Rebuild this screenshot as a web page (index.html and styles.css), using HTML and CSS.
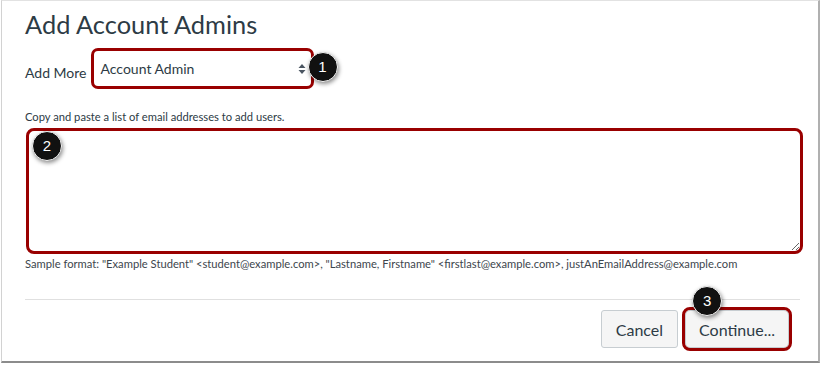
FILE: index.html
```html
<!DOCTYPE html>
<html>
<head>
<meta charset="utf-8">
<link rel="stylesheet" href="styles.css">
</head>
<body>
<div class="frame">
  <h1 class="title">Add Account Admins</h1>
  <div class="role-row">
    <span class="role-label">Add More</span>
    <div class="select-box">
      <span class="select-text">Account Admin</span>
      <svg class="select-arrows" width="8" height="12" viewBox="0 0 8 12">
        <path d="M4 1 L7.5 5 L0.5 5 Z" fill="#4a5561"/>
        <path d="M0.5 7 L7.5 7 L4 11 Z" fill="#4a5561"/>
      </svg>
      <span class="badge badge-1">1</span>
    </div>
  </div>
  <p class="hint">Copy and paste a list of email addresses to add users.</p>
  <div class="area-wrap">
    <textarea class="emails"></textarea>
    <span class="badge badge-2">2</span>
  </div>
  <p class="sample">Sample format: "Example Student" &lt;student@example.com&gt;, "Lastname, Firstname" &lt;firstlast@example.com&gt;, justAnEmailAddress@example.com</p>
  <div class="footer">
    <button class="btn">Cancel</button>
    <button class="btn btn-continue">Continue...<span class="badge badge-3">3</span></button>
  </div>
</div>
</body>
</html>
```

FILE: styles.css
```css
html, body {
  margin: 0;
  padding: 0;
  background: #ffffff;
}
body {
  width: 820px;
  height: 365px;
  font-family: Lato, "Noto Sans", sans-serif;
  color: #2d3b45;
}
.frame {
  box-sizing: border-box;
  margin-left: 1px;
  width: 819px;
  height: 363px;
  border-top: 1px solid #e2e2e2;
  border-left: 1px solid #d2d2d2;
  border-right: 2px solid #b0b0b0;
  border-bottom: 2px solid #8c8c8c;
  padding: 8px 0 0 23px;
}
.title {
  margin: 0;
  font-size: 25.4px;
  line-height: 31px;
  font-weight: 400;
  color: #2d3b45;
}
.role-row {
  display: flex;
  margin-top: 8px;
  gap: 4px;
}
.role-label {
  align-self: flex-start;
  margin-top: 15px;
  font-size: 14px;
  line-height: 20px;
}
.select-box {
  position: relative;
  box-sizing: border-box;
  width: 223px;
  height: 41px;
  border: 3px solid #990000;
  border-radius: 7px;
  display: flex;
  align-items: center;
  padding: 0 5px 0 7px;
}
.select-text {
  flex: 1;
  font-size: 14px;
  line-height: 20px;
  color: #2d3b45;
}
.select-arrows {
  display: block;
}
.badge {
  position: absolute;
  box-sizing: border-box;
  width: 30px;
  height: 30px;
  border-radius: 50%;
  background: #111111;
  border: 1.5px solid #f4f4f4;
  box-shadow: 1px 2px 4px rgba(0,0,0,0.45);
  color: #ffffff;
  font-family: "Liberation Sans", Arial, sans-serif;
  font-size: 15px;
  line-height: 27px;
  text-align: center;
}
.badge-1 {
  left: 214px;
  top: 1px;
}
.hint {
  margin: 20px 0 0 0;
  font-size: 11.2px;
  line-height: 16px;
  color: #2d3b45;
}
.area-wrap {
  position: relative;
  margin: 3px 0 0 1px;
  width: 777px;
  height: 126px;
}
.emails {
  display: block;
  box-sizing: border-box;
  width: 777px;
  height: 126px;
  margin: 0;
  border: 3px solid #990000;
  border-radius: 8px;
  background: #ffffff;
  resize: vertical;
  outline: none;
}
.badge-2 {
  left: 6px;
  top: 3px;
}
.sample {
  margin: 2px 0 0 0;
  font-size: 11.2px;
  line-height: 16px;
  color: #3d464d;
}
.footer {
  width: 775px;
  margin-top: 27px;
  border-top: 1px solid #e0e0e0;
  padding: 10px 11px 0 0;
  box-sizing: border-box;
  display: flex;
  justify-content: flex-end;
  gap: 7px;
}
.btn {
  position: relative;
  box-sizing: border-box;
  height: 38px;
  padding: 0 14px;
  border: 1px solid #c7cdd1;
  border-radius: 3px;
  background: #f5f5f5;
  font-family: Lato, "Noto Sans", sans-serif;
  font-size: 16px;
  color: #2d3b45;
}
.btn-continue {
  padding: 0 13px;
  outline: 3px solid #990000;
  outline-offset: 0;
  border-radius: 5px;
}
.badge-3 {
  left: 6px;
  top: -25px;
}
```
